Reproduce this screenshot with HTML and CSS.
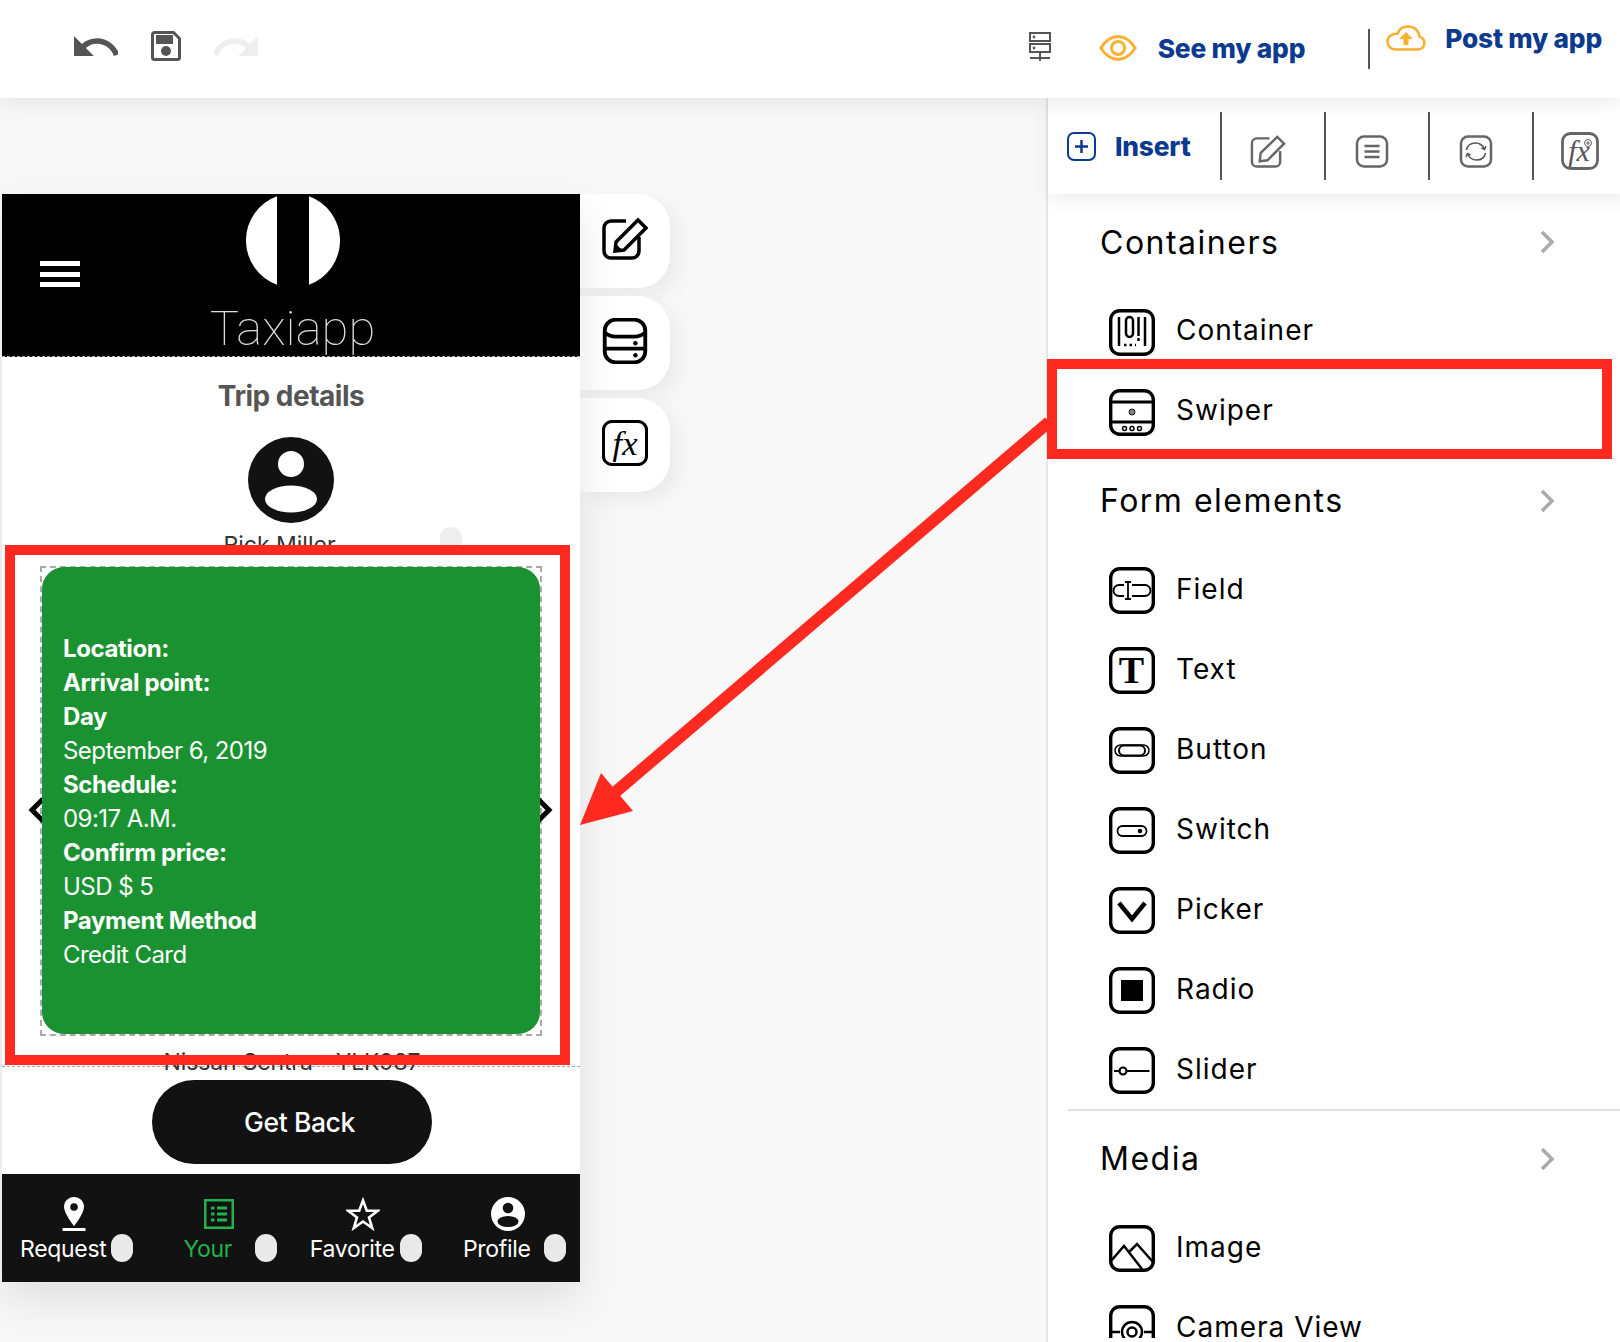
FILE: index.html
```html
<!DOCTYPE html>
<html lang="en">
<head>
<meta charset="utf-8">
<title>Taxiapp builder</title>
<link rel="stylesheet" href="styles.css">
</head>
<body>
<svg class="defs" width="0" height="0" aria-hidden="true">
  <symbol id="frame" viewBox="0 0 46 47"><rect x="1.7" y="1.7" width="42.6" height="43.6" rx="9" fill="none" stroke="#000" stroke-width="3.4"/></symbol>
</svg>
<header class="topbar">
  <div class="history">
    <svg class="ic-undo" viewBox="2 7 20 9"><path fill="#555" d="M12.5 8c-2.65 0-5.05.99-6.9 2.6L2 7v9h9l-3.62-3.62c1.39-1.16 3.16-1.88 5.12-1.88 3.54 0 6.55 2.31 7.6 5.5l2.37-.78C21.08 11.03 17.15 8 12.5 8z"/></svg>
    <svg class="ic-save" viewBox="0 0 30 30"><path fill="none" stroke="#555" stroke-width="3" d="M3.5 1.5h19l6 6v19a2 2 0 0 1-2 2h-23a2 2 0 0 1-2-2v-23a2 2 0 0 1 2-2z"/><rect x="5" y="4" width="17" height="9" fill="#555"/><circle cx="15" cy="20" r="5" fill="#555"/></svg>
    <svg class="ic-undo" viewBox="2 7 20 9"><path fill="#eee" d="M18.4 10.6C16.55 8.99 14.15 8 11.5 8c-4.65 0-8.58 3.03-9.96 7.22L3.9 16c1.05-3.19 4.05-5.5 7.6-5.5 1.95 0 3.73.72 5.12 1.88L13 16h9V7l-3.6 3.6z"/></svg>
  </div>
  <div class="actions">
    <svg class="ic-server" viewBox="0 0 22 30"><g fill="none" stroke="#555" stroke-width="2"><rect x="1" y="1" width="20" height="8"/><rect x="1" y="12" width="20" height="8"/><path d="M11 20v9M1 26h20"/></g><circle cx="5" cy="5" r="1.4" fill="#555"/><circle cx="5" cy="16" r="1.4" fill="#555"/></svg>
    <svg class="ic-eye" viewBox="0 0 38 26"><path fill="none" stroke="#fbb034" stroke-width="3" d="M1.8 13C7 5 12.500 1.600 19 1.600S31 5 36.200 13C31 21 25.500 24.400 19 24.400S7 21 1.800 13z"/><circle cx="19" cy="13" r="6.500" fill="none" stroke="#fbb034" stroke-width="3"/></svg>
    <span class="cta cta-see">See my app</span>
    <span class="vline"></span>
    <svg class="ic-cloud" viewBox="0 0 40 26"><path fill="none" stroke="#fbb034" stroke-width="2.600" d="M9 24.500h23a6.500 6.500 0 0 0 1.500-12.800C33 5.500 28 1.500 22 1.500c-5 0-9 3-10.500 7.300C5.500 8.500 1.500 12 1.500 16.500S5 24.500 9 24.500z"/><path fill="#fbb034" d="M20 7l7 7h-4.500v6h-5v-6H13z"/></svg>
    <span class="cta cta-post">Post my app</span>
  </div>
</header>

<main class="workspace">
  <section class="canvas">
    <div class="phone">
      <div class="app-head">
        <div class="burger"><span></span><span></span><span></span></div>
        <svg class="logo" viewBox="0 0 94 89"><path fill="#fff" d="M31 .3A47 47 0 0 0 31 88.700zM63 .3A47 47 0 0 1 63 88.700z"/></svg>
        <div class="brand">Taxiapp</div>
      </div>
      <div class="app-body">
        <h1 class="trip-title">Trip details</h1>
        <svg class="avatar" viewBox="0 0 86 86"><circle cx="43" cy="43" r="43" fill="#121212"/><circle cx="43" cy="27" r="13" fill="#fff"/><ellipse cx="43" cy="62" rx="26" ry="13.500" fill="#fff"/></svg>
        <div class="driver"><span>Rick Miller</span><i class="pill pill-driver"></i></div>
        <div class="swiper">
          <svg class="nav nav-prev" viewBox="0 0 17 26"><path fill="none" stroke="#000" stroke-width="5" d="M15 2L4 13l11 11"/></svg>
          <svg class="nav nav-next" viewBox="0 0 17 26"><path fill="none" stroke="#000" stroke-width="5" d="M2 2l11 11L2 24"/></svg>
          <div class="slide">
            <p class="b">Location:</p>
            <p class="b">Arrival point:</p>
            <p class="b">Day</p>
            <p>September 6, 2019</p>
            <p class="b">Schedule:</p>
            <p>09:17 A.M.</p>
            <p class="b">Confirm price:</p>
            <p>USD $ 5</p>
            <p class="b">Payment Method</p>
            <p>Credit Card</p>
          </div>
        </div>
        <div class="car">Nissan Sentra - YLK987</div>
      </div>
      <div class="app-foot"><button class="back">Get Back</button></div>
      <nav class="tabs">
        <div class="tab">
          <svg class="tab-ic" viewBox="0 0 34 34"><path fill="#fff" d="M17 0c-5.500 0-10 4.300-10 9.700C7 16.500 17 29 17 29s10-12.500 10-19.300C27 4.300 22.500 0 17 0z"/><circle cx="17" cy="10" r="3.800" fill="#121212"/><rect x="5.500" y="31" width="23" height="3" fill="#fff"/></svg>
          <div class="tab-row"><span class="tab-label">Request</span><i class="pill"></i></div>
        </div>
        <div class="tab tab-on">
          <svg class="tab-ic" viewBox="0 0 34 34"><g fill="#22b14c"><path fill-rule="evenodd" d="M2 2h30v30H2zM4.500 4.500v25h25v-25z"/><rect x="9" y="9.500" width="3.500" height="3"/><rect x="15" y="9.500" width="10" height="3"/><rect x="9" y="15.500" width="3.500" height="3"/><rect x="15" y="15.500" width="10" height="3"/><rect x="9" y="21.500" width="3.500" height="3"/><rect x="15" y="21.500" width="10" height="3"/></g></svg>
          <div class="tab-row"><span class="tab-label">Your</span><i class="pill"></i></div>
        </div>
        <div class="tab">
          <svg class="tab-ic" viewBox="0 0 34 34"><path fill="none" stroke="#fff" stroke-width="2.600" d="M17 3.500l3.800 10.200h11l-8.800 6.700 3.200 10.600-9.200-6.500L7.800 31l3.200-10.600-8.800-6.700h11z"/></svg>
          <div class="tab-row"><span class="tab-label">Favorite</span><i class="pill"></i></div>
        </div>
        <div class="tab">
          <svg class="tab-ic" viewBox="0 0 34 34"><circle cx="17" cy="17" r="17" fill="#fff"/><circle cx="17" cy="11" r="5.300" fill="#121212"/><ellipse cx="17" cy="24.500" rx="10.500" ry="5.500" fill="#121212"/></svg>
          <div class="tab-row"><span class="tab-label">Profile</span><i class="pill"></i></div>
        </div>
      </nav>
    </div>
    <aside class="tools">
      <div class="tool">
        <svg class="tool-ic" viewBox="0 0 46 42"><g fill="none" stroke="#000" stroke-width="3.500"><path d="M24 3H9a7 7 0 0 0-7 7v23a7 7 0 0 0 7 7h21a7 7 0 0 0 7-7V19"/><path d="M14 24L36 2l8 8-22 22-9 1z"/></g><path d="M13 33l1-7 6 6z"/></svg>
      </div>
      <div class="tool">
        <svg class="tool-ic" viewBox="0 0 41 42"><g fill="none" stroke="#000" stroke-width="3.500"><rect x="2" y="1.500" width="37" height="39" rx="10"/><path d="M2 13c3 3 6 4 10 4h17c4 0 7-1 10-4M2 28h37"/></g><circle cx="30" cy="23" r="2" fill="#000"/><circle cx="30" cy="34" r="2" fill="#000"/></svg>
      </div>
      <div class="tool">
        <svg class="tool-ic" viewBox="0 0 48 48"><rect x="1.500" y="1.500" width="45" height="45" rx="9" fill="none" stroke="#000" stroke-width="3.200"/><text class="fx" x="24" y="36" text-anchor="middle">fx</text></svg>
      </div>
    </aside>
  </section>

  <aside class="panel">
    <div class="panel-tabs">
      <div class="insert">
        <svg class="ic-insert" viewBox="0 0 29 29"><rect x="1" y="1" width="27" height="27" rx="6" fill="none" stroke="#0b3a8f" stroke-width="2"/><path stroke="#0b3a8f" stroke-width="2.500" d="M14.500 8v13M8 14.500h13"/></svg>
        <span class="cta cta-insert">Insert</span>
      </div>
      <div class="seg"><svg class="seg-ic" viewBox="0 0 37 33"><g fill="none" stroke="#666" stroke-width="2.500"><path d="M20 3H7a5 5 0 0 0-5 5v19a5 5 0 0 0 5 5h19a5 5 0 0 0 5-5V16"/><path d="M11 18L28 1.500l7 7-17 17-8 1z"/></g></svg></div>
      <div class="seg"><svg class="seg-ic" viewBox="0 0 33 33"><rect x="1.500" y="1.500" width="30" height="30" rx="7" fill="none" stroke="#666" stroke-width="2.500"/><path stroke="#666" stroke-width="2.500" d="M9 11h15M9 16.500h15M9 22h15"/></svg></div>
      <div class="seg"><svg class="seg-ic" viewBox="0 0 33 33"><rect x="1.500" y="1.500" width="30" height="30" rx="7" fill="none" stroke="#666" stroke-width="2.500"/><g fill="none" stroke="#555" stroke-width="1.500"><path d="M7 15c1-5 5-7 9-7 4 0 7 2 9 6"/><path d="M26 18c-1 5-5 7-9 7-4 0-7-2-9-6"/><path d="M22 13l3 1.500 1.500-3.500M11 20l-3-1.500L6.500 22"/></g></svg></div>
      <div class="seg"><svg class="seg-fx" viewBox="0 0 38 38"><rect x="1.500" y="1.500" width="35" height="35" rx="8" fill="none" stroke="#666" stroke-width="2.800"/><text class="fx fx-small" x="18" y="29" text-anchor="middle">fx</text><circle cx="27" cy="11" r="3.500" fill="none" stroke="#666"/><path stroke="#666" d="M27 9v4M25 11h4"/></svg></div>
    </div>
    <div class="list-wrap">
      <div class="list">
        <div class="sec-head"><span>Containers</span><svg class="chev" viewBox="0 0 15 24"><path fill="none" stroke="#aaa" stroke-width="3.500" d="M2 2l10 10L2 22"/></svg></div>
        <div class="rows">
          <div class="row"><svg class="ico" viewBox="0 0 46 47"><use href="#frame"/><g stroke="#000" fill="none" stroke-width="2.500"><path d="M10 8v29M36 8v29M29.500 8v19M29.500 29v3"/><rect x="17" y="8" width="7" height="20" rx="3.500"/><path stroke-dasharray="2.500 3" d="M15 36h12"/></g></svg><span>Container</span></div>
          <div class="row"><svg class="ico" viewBox="0 0 46 47"><use href="#frame"/><path stroke="#000" stroke-width="3" d="M2 13h42M2 33h42"/><g fill="none" stroke="#000"><circle cx="23" cy="23" r="3"/><path d="M21 22h4M21 24h4"/><g stroke-width="1.500"><circle cx="15.500" cy="39.500" r="2"/><circle cx="23" cy="39.500" r="2"/><circle cx="30.500" cy="39.500" r="2"/></g></g></svg><span>Swiper</span></div>
        </div>
        <div class="sec-head sec-next"><span>Form elements</span><svg class="chev" viewBox="0 0 15 24"><path fill="none" stroke="#aaa" stroke-width="3.500" d="M2 2l10 10L2 22"/></svg></div>
        <div class="rows">
          <div class="row"><svg class="ico" viewBox="0 0 46 47"><use href="#frame"/><g fill="none" stroke="#000" stroke-width="1.800"><path d="M15 18H10a5.500 5.500 0 0 0 0 11h5M23 18h13a5.500 5.500 0 0 1 0 11H23"/><path d="M16 15h6M16 32h6M19 15v17"/></g></svg><span>Field</span></div>
          <div class="row"><svg class="ico" viewBox="0 0 46 47"><use href="#frame"/><text class="t-glyph" x="23" y="36" text-anchor="middle">T</text></svg><span>Text</span></div>
          <div class="row"><svg class="ico" viewBox="0 0 46 47"><use href="#frame"/><g fill="none" stroke="#000"><rect x="6" y="18" width="34" height="11" rx="5.500" stroke-width="1.500"/><rect x="10" y="18.500" width="26" height="10" rx="5" stroke-width="2"/></g></svg><span>Button</span></div>
          <div class="row"><svg class="ico" viewBox="0 0 46 47"><use href="#frame"/><rect x="8.500" y="19" width="29" height="10" rx="5" fill="none" stroke="#000" stroke-width="1.800"/><circle cx="31" cy="24" r="2.300"/></svg><span>Switch</span></div>
          <div class="row"><svg class="ico" viewBox="0 0 46 47"><use href="#frame"/><path fill="none" stroke="#000" stroke-width="4.500" d="M10 16l13 16 13-16"/></svg><span>Picker</span></div>
          <div class="row"><svg class="ico" viewBox="0 0 46 47"><use href="#frame"/><rect x="12" y="13" width="22" height="21"/></svg><span>Radio</span></div>
          <div class="row"><svg class="ico" viewBox="0 0 46 47"><use href="#frame"/><g fill="none" stroke="#000" stroke-width="2.200"><circle cx="14" cy="24" r="3.500"/><path d="M5 24h5.500M17.500 24h23"/></g></svg><span>Slider</span></div>
        </div>
        <hr class="rule">
        <div class="sec-head sec-media"><span>Media</span><svg class="chev" viewBox="0 0 15 24"><path fill="none" stroke="#aaa" stroke-width="3.500" d="M2 2l10 10L2 22"/></svg></div>
        <div class="rows">
          <div class="row"><svg class="ico" viewBox="0 0 46 47"><use href="#frame"/><path fill="none" stroke="#000" stroke-width="2.500" d="M2 36l13-15 18 23M20 27l8-8 16 18"/></svg><span>Image</span></div>
          <div class="row"><svg class="ico ico-cut" viewBox="0 0 46 33"><rect x="1.700" y="1.700" width="42.600" height="43.600" rx="9" fill="none" stroke="#000" stroke-width="3.400"/><g fill="none" stroke="#000" stroke-width="2.500"><path d="M2 27h9M35 27h9"/><circle cx="23" cy="27" r="10"/><circle cx="23" cy="27" r="4.500"/></g></svg><span>Camera View</span></div>
        </div>
      </div>
      <div class="track"></div>
    </div>
  </aside>
</main>

<svg class="marks" viewBox="0 0 1620 1342" aria-hidden="true">
  <g fill="none" stroke="#ff2a1f" stroke-width="10">
    <rect x="10" y="550" width="555" height="510"/>
    <rect x="1052" y="364" width="555" height="90"/>
    <path stroke-width="12" d="M1049 422L612 795"/>
  </g>
  <path fill="#ff2a1f" d="M580 825L601 773 633 811z"/>
</svg>
</body>
</html>
```

FILE: styles.css
```css
* { box-sizing: border-box; }
html, body { margin: 0; padding: 0; }
body {
  width: 1620px;
  height: 1342px;
  overflow: hidden;
  position: relative;
  background: #f8f8f8;
  font-family: Inter, "Liberation Sans", sans-serif;
  color: #000;
}
.defs { position: absolute; }

/* top bar */
.topbar {
  height: 98px;
  background: #fff;
  display: flex;
  align-items: center;
  justify-content: space-between;
  position: relative;
  z-index: 3;
  box-shadow: 0 2px 22px rgba(0,0,0,.1);
}
.history { display: flex; align-items: center; gap: 33px; padding-left: 74px; margin-top: -6px; }
.ic-undo { width: 44px; height: 20px; }
.ic-save { width: 30px; height: 30px; }
.actions { display: flex; align-items: center; padding-right: 18px; }
.ic-server { width: 22px; height: 30px; margin-right: 48px; margin-top: -4px; }
.ic-eye { width: 38px; height: 26px; margin-right: 21px; margin-top: -2px; }
.cta { font-weight: 800; color: #0b3a8f; font-size: 26.300px; letter-spacing: -0.2px; white-space: nowrap; line-height: 30px; }
.cta-see { margin-top: 0; }
.vline { width: 2px; height: 40px; background: #555; margin: 0 16px 0 63px; }
.ic-cloud { width: 40px; height: 26px; margin: -22px 19px 0 0; }
.cta-post { margin-top: -20px; }

/* workspace */
.workspace { display: flex; height: 1244px; }
.canvas { width: 1046px; flex: none; display: flex; align-items: flex-start; padding: 96px 0 0 2px; }

/* phone */
.phone {
  width: 578px;
  flex: none;
  position: relative;
  z-index: 1;
  background: #fff;
  box-shadow: 0 18px 40px rgba(0,0,0,.1);
}
.app-head {
  height: 163px;
  background: #000;
  border-bottom: 1px dashed #aaa;
  position: relative;
  display: flex;
  flex-direction: column;
  align-items: center;
}
.burger { position: absolute; left: 38px; top: 67px; width: 40px; display: flex; flex-direction: column; gap: 5.500px; }
.burger span { height: 5px; background: #fff; }
.logo { width: 94px; height: 89px; flex: none; margin: 2px 0 0 4px; display: block; }
.brand { flex: none; font-family: Roboto, sans-serif; font-weight: 100; font-size: 49px; line-height: 56px; color: #ddd; margin: 16px 0 0 3px; }
.app-body { height: 710px; border-bottom: 1px dashed #aaa; }
.trip-title { margin: 0; padding-top: 20px; font-size: 28px; line-height: 38px; font-weight: 700; color: #555; text-align: center; letter-spacing: -0.5px; height: 79px; }
.avatar { display: block; width: 86px; height: 86px; margin: 1px auto 0 246px; }
.driver { position: relative; height: 31px; font-size: 23px; line-height: 32px; color: #333; text-align: center; padding: 6px 23px 0 0; }
.pill { display: block; width: 22px; height: 28px; border-radius: 11px; background: #e9e9e9; flex: none; }
.pill-driver { position: absolute; left: 438px; top: 4px; background: #eee; }
.swiper { position: relative; margin: 12px 38px 0 38px; height: 470px; border: 2px dashed #aaa; background: #fff; box-shadow: 0 -12px 0 #fff; }
.slide { position: relative; z-index: 1; height: 467px; margin-top: -1px; background: #1a9232; border-radius: 22px; padding: 65px 21px 0; color: #fff; font-size: 24px; line-height: 34px; letter-spacing: -0.55px; }
.slide p { margin: 0; }
.slide .b { font-weight: 700; letter-spacing: -0.4px; }
.nav { position: absolute; top: 229px; width: 17px; height: 26px; }
.nav-prev { left: -14px; }
.nav-next { right: -13px; }
.car { font-size: 23px; line-height: 30px; color: #333; text-align: center; padding: 0 0 0 2px; margin-top: 11px; letter-spacing: -0.15px; }

.app-foot { height: 107px; padding-top: 13px; }
.back { display: block; width: 280px; height: 84px; margin-left: 150px; border: 0; border-radius: 42px; background: #121212; color: #fff; font: 500 26.500px/34px Inter, sans-serif; letter-spacing: -0.4px; padding: 0 0 0 15px; }

.tabs { height: 108px; background: #121212; display: grid; grid-template-columns: repeat(4, 1fr); }
.tab { padding: 23px 14px 0 14px; display: flex; flex-direction: column; align-items: center; }
.tab-ic { width: 34px; height: 34px; display: block; }
.tab-row { align-self: stretch; display: flex; align-items: center; margin-top: 3px; height: 28px; }
.tab-label { flex: 1; text-align: center; color: #fff; font-size: 23px; letter-spacing: -0.3px; line-height: 28px; padding-top: 2px; white-space: nowrap; }
.tab-on .tab-label { color: #22b14c; }

/* side tools */
.tools { display: flex; flex-direction: column; gap: 8px; }
.tool {
  width: 90px;
  height: 94px;
  background: #fff;
  border-radius: 0 32px 32px 0;
  box-shadow: 8px 8px 20px rgba(0,0,0,.06);
  display: flex;
  align-items: center;
  justify-content: center;
  padding: 0 0 4px 0;
}
.tool-ic { width: 46px; height: 46px; }
.fx { font: italic 400 36px "Liberation Serif", serif; fill: #000; }
.fx-small { font-size: 30px; fill: #555; }
.t-glyph { font: 700 38px "Liberation Serif", serif; fill: #000; }

/* right panel */
.panel { flex: 1; border-left: 2px solid #e6e6e6; background: #fff; height: 1244px; position: relative; z-index: 2; }
.panel-tabs {
  height: 96px;
  display: flex;
  align-items: flex-start;
  padding-top: 14px;
  background: #fff;
  position: relative;
  z-index: 1;
  box-shadow: 0 6px 18px rgba(0,0,0,.07);
}
.insert { width: 172px; height: 68px; padding-left: 19px; display: flex; align-items: flex-start; gap: 19px; }
.ic-insert { width: 29px; height: 29px; margin-top: 20px; }
.cta-insert { margin-top: 20px; }
.seg { width: 104px; height: 68px; border-left: 2px solid #555; display: flex; align-items: center; justify-content: center; padding: 10px 10px 0 0; }
.seg-ic { width: 36px; height: 33px; }
.seg-fx { width: 38px; height: 38px; }
.list-wrap { display: flex; height: 1148px; overflow: hidden; }
.list { flex: 1; padding-top: 23px; min-width: 0; }
.track { width: 16px; height: 789px; margin-top: 3px; background: #ececec; border-radius: 8px 0 0 8px; flex: none; }
.sec-head { height: 50px; display: flex; align-items: center; justify-content: space-between; margin-left: 52px; padding-right: 65px; font-size: 32px; letter-spacing: 1.500px; color: #000; }
.sec-next { margin-top: 40px; }
.sec-media { margin-top: 22.500px; }
.chev { width: 15px; height: 24px; flex: none; }
.rows { margin-top: 41.500px; display: flex; flex-direction: column; gap: 33px; padding-left: 61px; }
.row { display: flex; align-items: center; height: 47px; gap: 21px; font-size: 28px; letter-spacing: 1px; line-height: 24px; color: #000; }
.row span { position: relative; top: -2px; }
.ico { width: 46px; height: 47px; flex: none; overflow: hidden; }
.ico-cut { height: 33px; align-self: flex-start; }
.rule { height: 2px; border: 0; background: #e0e0e0; margin: 15px 0 0 20px; }

/* annotation overlay */
.marks { position: absolute; left: 0; top: 0; width: 1620px; height: 1342px; z-index: 5; pointer-events: none; }
```
